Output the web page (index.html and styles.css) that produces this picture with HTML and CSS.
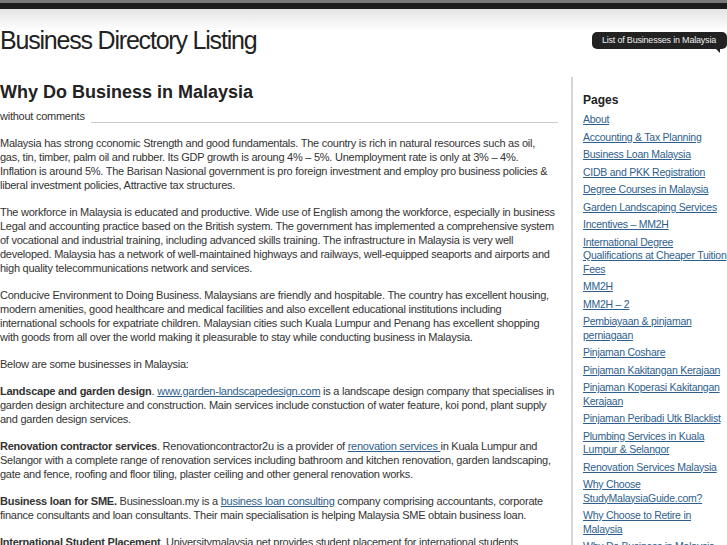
FILE: index.html
```html
<!DOCTYPE html>
<html lang="en">
<head>
    <meta charset="UTF-8">
    <title>Why Do Business in Malaysia - Business Directory Listing</title>
    <link rel="stylesheet" href="styles.css">
</head>
<body>
    <div class="topbar"></div>
    <div class="header">
        <h1 class="site-title">Business Directory Listing</h1>
        <div class="tagline">List of Businesses in Malaysia</div>
    </div>

    <div class="wrapper">
        <div class="content">
            <h2 class="post-title">Why Do Business in Malaysia</h2>
            <div class="post-meta"><span>without comments</span></div>

            <p>Malaysia has strong cconomic Strength and good fundamentals. The country is rich in natural resources such as oil,<br>
            gas, tin, timber, palm oil and rubber. Its GDP growth is aroung 4% &ndash; 5%. Unemployment rate is only at 3% &ndash; 4%.<br>
            Inflation is around 5%. The Barisan Nasional government is pro foreign investment and employ pro business policies &amp;<br>
            liberal investment policies, Attractive tax structures.</p>

            <p>The workforce in Malaysia is educated and productive. Wide use of English among the workforce, especially in business<br>
            Legal and accounting practice based on the British system. The government has implemented a comprehensive system<br>
            of vocational and industrial training, including advanced skills training. The infrastructure in Malaysia is very well<br>
            developed. Malaysia has a network of well-maintained highways and railways, well-equipped seaports and airports and<br>
            high quality telecommunications network and services.</p>

            <p>Conducive Environment to Doing Business. Malaysians are friendly and hospitable. The country has excellent housing,<br>
            modern amenities, good healthcare and medical facilities and also excellent educational institutions including<br>
            international schools for expatriate children. Malaysian cities such Kuala Lumpur and Penang has excellent shopping<br>
            with goods from all over the world making it pleasurable to stay while conducting business in Malaysia.</p>

            <p>Below are some businesses in Malaysia:</p>

            <p><strong>Landscape and garden design</strong>. <a href="#">www.garden-landscapedesign.com</a> is a landscape design company that specialises in<br>
            garden design architecture and construction. Main services include constuction of water feature, koi pond, plant supply<br>
            and garden design services.</p>

            <p><strong>Renovation contractor services</strong>. Renovationcontractor2u is a provider of <a href="#">renovation services </a>in Kuala Lumpur and<br>
            Selangor with a complete range of renovation services including bathroom and kitchen renovation, garden landscaping,<br>
            gate and fence, roofing and floor tiling, plaster ceiling and other general renovation works.</p>

            <p><strong>Business loan for SME.</strong> Businessloan.my is a <a href="#">business loan consulting</a> company comprising accountants, corporate<br>
            finance consultants and loan consultants. Their main specialisation is helping Malaysia SME obtain business loan.</p>

            <p><strong>International Student Placement</strong>. Universitymalaysia.net provides student placement for international students<br>
            who wish to study in Malaysia.</p>
        </div>

        <div class="sidebar">
            <h3>Pages</h3>
            <ul class="page-list">
                <li><a href="#">About</a></li>
                <li><a href="#">Accounting &amp; Tax Planning</a></li>
                <li><a href="#">Business Loan Malaysia</a></li>
                <li><a href="#">CIDB and PKK Registration</a></li>
                <li><a href="#">Degree Courses in Malaysia</a></li>
                <li><a href="#">Garden Landscaping Services</a></li>
                <li><a href="#">Incentives &ndash; MM2H</a></li>
                <li><a href="#">International Degree Qualifications at Cheaper Tuition Fees</a></li>
                <li><a href="#">MM2H</a></li>
                <li><a href="#">MM2H &ndash; 2</a></li>
                <li><a href="#">Pembiayaan &amp; pinjaman perniagaan</a></li>
                <li><a href="#">Pinjaman Coshare</a></li>
                <li><a href="#">Pinjaman Kakitangan Kerajaan</a></li>
                <li><a href="#">Pinjaman Koperasi Kakitangan Kerajaan</a></li>
                <li><a href="#">Pinjaman Peribadi Utk Blacklist</a></li>
                <li><a href="#">Plumbing Services in Kuala Lumpur &amp; Selangor</a></li>
                <li><a href="#">Renovation Services Malaysia</a></li>
                <li><a href="#">Why Choose StudyMalaysiaGuide.com?</a></li>
                <li><a href="#">Why Choose to Retire in Malaysia</a></li>
                <li><a href="#">Why Do Business in Malaysia</a></li>
            </ul>
        </div>
    </div>
</body>
</html>
```

FILE: styles.css
```css
body {
    font-family: "Liberation Sans", Arial, sans-serif;
    font-size: 11px;
    letter-spacing: -0.25px;
    color: #333;
    background: #fff;
    margin: 0;
    overflow: hidden;
}

.topbar {
    height: 6px;
    border-top: 3px solid #7a7a7a;
    background: #1c1c1c;
}

.header {
    display: flex;
    justify-content: space-between;
    align-items: flex-start;
    height: 68px;
    background: linear-gradient(to bottom, #e4e4e4 0%, #ffffff 22px);
}

.site-title {
    margin: 17px 0 0 0;
    font-size: 25px;
    font-weight: normal;
    letter-spacing: -1.2px;
    color: #222;
}

.tagline {
    position: relative;
    margin-top: 23px;
    padding: 3px 11px 3px 10px;
    background: #222;
    color: #eee;
    font-size: 9px;
    letter-spacing: -0.2px;
    line-height: 11px;
    border-radius: 5px;
}

.tagline:after {
    content: "";
    position: absolute;
    right: 7px;
    bottom: -4px;
    border-top: 4px solid #222;
    border-left: 4px solid transparent;
}

.wrapper {
    display: flex;
    align-items: flex-start;
}

.content {
    width: 558px;
    flex-shrink: 0;
}

.post-title {
    margin: 5px 0 0 0;
    font-size: 18px;
    letter-spacing: 0;
    color: #222;
}

.post-meta {
    display: flex;
    align-items: center;
    margin-top: 6px;
}

.post-meta span {
    flex-shrink: 0;
    margin-right: 6px;
}

.post-meta:after {
    content: "";
    flex: 1;
    border-top: 1px solid #ccc;
    margin-top: 13px;
}

.content p {
    margin: 13px 0;
    line-height: 14px;
    white-space: nowrap;
}

a {
    color: #2e5e8c;
}

.sidebar {
    flex: none;
    width: 150px;
    margin-left: 13px;
    padding: 16px 0 0 10px;
    border-left: 2px solid #d6d6d6;
    min-height: 500px;
}

.sidebar h3 {
    margin: 0 0 6px 0;
    font-size: 12px;
    letter-spacing: 0;
    color: #222;
}

.page-list {
    list-style: none;
    margin: 0;
    padding: 0;
    font-size: 10.5px;
}

.page-list li {
    line-height: 13.5px;
    margin-bottom: 4px;
}
```
